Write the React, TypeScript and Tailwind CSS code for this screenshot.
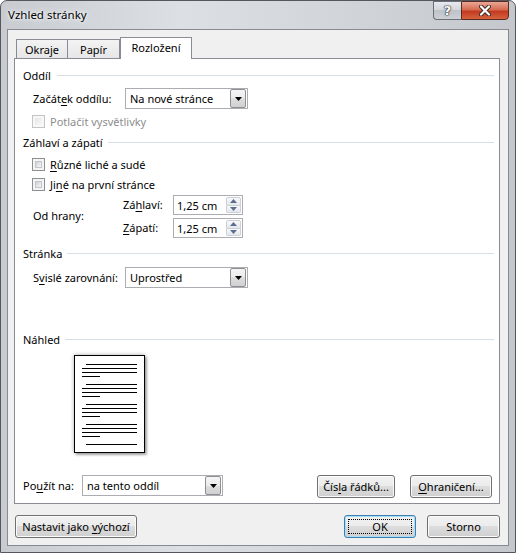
import type { ReactNode } from "react";

// Dialog "Vzhled stránky" – karta Rozložení (Windows 7 styl)

function Accel({ children }: { children: ReactNode }) {
  return <span className="underline underline-offset-[2px] decoration-1">{children}</span>;
}

function GroupHeading({ title, labelClass = "" }: { title: string; labelClass?: string }) {
  return (
    <div className="flex items-center h-[16px] gap-[5px] pr-[5px]">
      <span className={labelClass}>{title}</span>
      <div className="flex-1 h-px bg-[#d5dfe5]" />
    </div>
  );
}

function Checkbox({ disabled = false }: { disabled?: boolean }) {
  return (
    <span
      className={`flex w-[13px] h-[13px] p-[2px] border ${
        disabled ? "border-[#c4c4c4] bg-[#f7f7f7]" : "border-[#8e8f8f] bg-[#f4f4f4]"
      }`}
    >
      <span
        className={`flex-1 ${
          disabled
            ? "bg-gradient-to-br from-[#e6e6e6] to-[#f8f8f8]"
            : "bg-gradient-to-br from-[#cdd1d6] to-[#f7f7f7] border border-[#c3c7cc]"
        }`}
      />
    </span>
  );
}

function Dropdown({ value, widthClass }: { value: string; widthClass: string }) {
  return (
    <div className={`${widthClass} h-[21px] flex items-center border border-[#abadb3] bg-white`}>
      <span className="flex-1 pl-[4px]">{value}</span>
      <span className="flex items-center justify-center w-[16px] h-[19px] mr-px border border-[#8f8f8f] rounded-[2px] bg-[linear-gradient(#f4f4f4,#ececec_50%,#dedede_50%,#d0d0d0)]">
        <svg width="7" height="4" viewBox="0 0 7 4">
          <path d="M0 0h7L3.5 4z" fill="#000" />
        </svg>
      </span>
    </div>
  );
}

function SpinInput({ value }: { value: string }) {
  return (
    <div className="w-[70px] h-[20px] flex border border-[#abadb3] bg-white">
      <span className="flex-1 pl-[3px] flex items-center">{value}</span>
      <div className="flex flex-col w-[15px] py-px mr-px">
        <span className="flex-1 flex items-center justify-center border border-[#ccd1d8] rounded-t-[2px] bg-[linear-gradient(#f8f9fa,#e4e8ec)]">
          <svg width="7" height="4" viewBox="0 0 7 4">
            <path d="M0 4h7L3.5 0z" fill="#5b6e8e" />
          </svg>
        </span>
        <span className="flex-1 flex items-center justify-center border border-t-0 border-[#ccd1d8] rounded-b-[2px] bg-[linear-gradient(#f8f9fa,#e4e8ec)]">
          <svg width="7" height="4" viewBox="0 0 7 4">
            <path d="M0 0h7L3.5 4z" fill="#5b6e8e" />
          </svg>
        </span>
      </div>
    </div>
  );
}

function Button({
  widthClass,
  children,
  primary = false,
}: {
  widthClass: string;
  children: ReactNode;
  primary?: boolean;
}) {
  return (
    <div
      className={`${widthClass} h-[23px] relative flex items-center justify-center rounded-[3px] border bg-[linear-gradient(#f2f2f2,#ebebeb_50%,#dddddd_50%,#cfcfcf)] ${
        primary
          ? "border-[#3c7fb1] shadow-[inset_0_0_0_1px_#a9dcf6]"
          : "border-[#707070] shadow-[inset_0_0_0_1px_#fbfbfb]"
      }`}
    >
      {primary && <span className="absolute inset-[3px] border border-dotted border-black" />}
      <span className="relative">{children}</span>
    </div>
  );
}

function PreviewPage() {
  const paras = [0, 20, 40, 60];
  return (
    <div className="w-[71px] h-[98px] border border-black bg-white shadow-[0_0_4px_rgba(0,0,0,0.35),2px_2px_2px_rgba(0,0,0,0.25)]">
      <svg width="69" height="96" viewBox="0 0 69 96" shapeRendering="crispEdges">
        {paras.map((y) => (
          <g key={y} stroke="#000" strokeWidth="1">
            <line x1="11" x2="62" y1={8.5 + y} y2={8.5 + y} />
            <line x1="7" x2="62" y1={12.5 + y} y2={12.5 + y} />
            <line x1="7" x2="62" y1={16.5 + y} y2={16.5 + y} />
            <line x1="7" x2="25" y1={20.5 + y} y2={20.5 + y} />
          </g>
        ))}
        <line x1="11" x2="62" y1="88.5" y2="88.5" stroke="#000" strokeWidth="1" />
      </svg>
    </div>
  );
}

function TitleButtons() {
  return (
    <div className="flex h-[19px]">
      <div className="w-[28px] flex items-center justify-center border border-r-0 border-[#6b6f76] rounded-bl-[4px] bg-[linear-gradient(#e6e9ed,#d2d6db_50%,#bec3ca_50%,#cdd1d6)]">
        <span className="text-white font-bold text-[13px] font-['DejaVu_Sans',sans-serif] [text-shadow:0_0_1px_#2b2b2b,0_0_1px_#2b2b2b,0_0_2px_#2b2b2b]">
          ?
        </span>
      </div>
      <div className="w-[48px] flex items-center justify-center border border-[#5a2b22] rounded-br-[4px] bg-[linear-gradient(#eaa796,#d66c52_45%,#c33a20_55%,#d6623f)]">
        <svg width="12" height="11" viewBox="0 0 12 11">
          <path d="M2 1.5L10 9.5M10 1.5L2 9.5" stroke="#3a2a28" strokeWidth="4" strokeLinecap="round" />
          <path d="M2 1.5L10 9.5M10 1.5L2 9.5" stroke="#fff" strokeWidth="2.2" strokeLinecap="round" />
        </svg>
      </div>
    </div>
  );
}

export default function App() {
  return (
    <div className="w-[516px] h-[553px] font-['Noto_Sans',sans-serif] text-[11px] text-black leading-none">
      <div className="flex flex-col h-full rounded-t-[7px] border border-[#54585e] bg-[linear-gradient(90deg,#c8ccd1,#dcdfe3_35%,#d0d3d8_70%,#c4c8cd)] px-[6px] pb-[6px]">
        {/* titulek */}
        <div className="h-[28px] flex justify-between items-start">
          <div className="h-[28px] flex items-center pl-px text-[11.5px] [text-shadow:0_0_6px_#ffffff,0_0_3px_#ffffff]">
            Vzhled stránky
          </div>
          <TitleButtons />
        </div>

        {/* klientská oblast */}
        <div className="flex-1 flex flex-col border border-[#868a91] bg-[#f0f0f0] pl-[6px] pt-[7px]">
          {/* karty */}
          <div className="relative z-10 flex items-end h-[22px] ml-[2px]">
            <div className="w-[52px] h-[19px] mb-px flex items-center justify-center border border-b-0 border-[#898c95] bg-[linear-gradient(#f3f3f3,#e6e6e6)]">
              Okraje
            </div>
            <div className="w-[52px] h-[19px] mb-px flex items-center justify-center border border-l-0 border-b-0 border-[#898c95] bg-[linear-gradient(#f3f3f3,#e6e6e6)]">
              Papír
            </div>
            <div className="w-[72px] h-[22px] pb-[3px] flex items-center justify-center border border-b-0 border-[#898c95] bg-white">
              Rozložení
            </div>
          </div>

          {/* panel */}
          <div className="-mt-px w-[486px] h-[446px] flex flex-col border border-[#898c95] bg-white pl-[8px] pt-[8px]">
            <GroupHeading title="Oddíl" labelClass="w-[29px]" />
            <div className="mt-[5px] flex items-center h-[21px]">
              <span className="w-[102px] pl-[10px]">
                Začát<Accel>e</Accel>k oddílu:
              </span>
              <Dropdown value="Na nové stránce" widthClass="w-[123px]" />
            </div>
            <div className="mt-[4px] flex items-center h-[16px] pl-[9px] gap-[5px] text-[#8d8d8d]">
              <Checkbox disabled />
              <span>Potlačit vysvětlivky</span>
            </div>

            <div className="mt-[5px]">
              <GroupHeading title="Záhlaví a zápatí" />
            </div>
            <div className="mt-[6px] flex items-center h-[16px] pl-[9px] gap-[5px]">
              <Checkbox />
              <span>
                <Accel>R</Accel>ůzné liché a sudé
              </span>
            </div>
            <div className="mt-[4px] flex items-center h-[16px] pl-[9px] gap-[5px]">
              <Checkbox />
              <span>
                Ji<Accel>n</Accel>é na první stránce
              </span>
            </div>
            <div className="mt-[3px] flex items-center">
              <span className="w-[100px] pl-[10px] pb-[2px]">Od hrany:</span>
              <div className="flex flex-col gap-[3px]">
                <div className="flex items-center h-[20px]">
                  <span className="w-[50px] pb-[2px]">
                    Zá<Accel>h</Accel>laví:
                  </span>
                  <SpinInput value="1,25 cm" />
                </div>
                <div className="flex items-center h-[20px]">
                  <span className="w-[50px] pb-px">
                    <Accel>Z</Accel>ápatí:
                  </span>
                  <SpinInput value="1,25 cm" />
                </div>
              </div>
            </div>

            <div className="mt-[7px]">
              <GroupHeading title="Stránka" />
            </div>
            <div className="mt-[6px] flex items-center h-[21px]">
              <span className="w-[102px] pl-[10px]">
                S<Accel>v</Accel>islé zarovnání:
              </span>
              <Dropdown value="Uprostřed" widthClass="w-[123px]" />
            </div>

            <div className="mt-[43px]">
              <GroupHeading title="Náhled" />
            </div>
            <div className="mt-[8px] ml-[51px]">
              <PreviewPage />
            </div>

            <div className="mt-[22px] flex items-start justify-between pr-[7px]">
              <div className="flex items-center h-[21px]">
                <span className="w-[59px]">
                  Po<Accel>u</Accel>žít na:
                </span>
                <Dropdown value="na tento oddíl" widthClass="w-[141px]" />
              </div>
              <div className="flex gap-[15px]">
                <Button widthClass="w-[78px]">
                  Čís<Accel>l</Accel>a řádků...
                </Button>
                <Button widthClass="w-[82px]">
                  <Accel>O</Accel>hraničení...
                </Button>
              </div>
            </div>
          </div>

          {/* spodní tlačítka */}
          <div className="mt-[11px] w-[486px] flex items-center justify-between">
            <div className="ml-px">
              <Button widthClass="w-[122px]">
                Nastavit jako <Accel>v</Accel>ýchozí
              </Button>
            </div>
            <div className="flex gap-[11px]">
              <Button widthClass="w-[72px]" primary>
                OK
              </Button>
              <Button widthClass="w-[73px]">Storno</Button>
            </div>
          </div>
        </div>
      </div>
    </div>
  );
}
